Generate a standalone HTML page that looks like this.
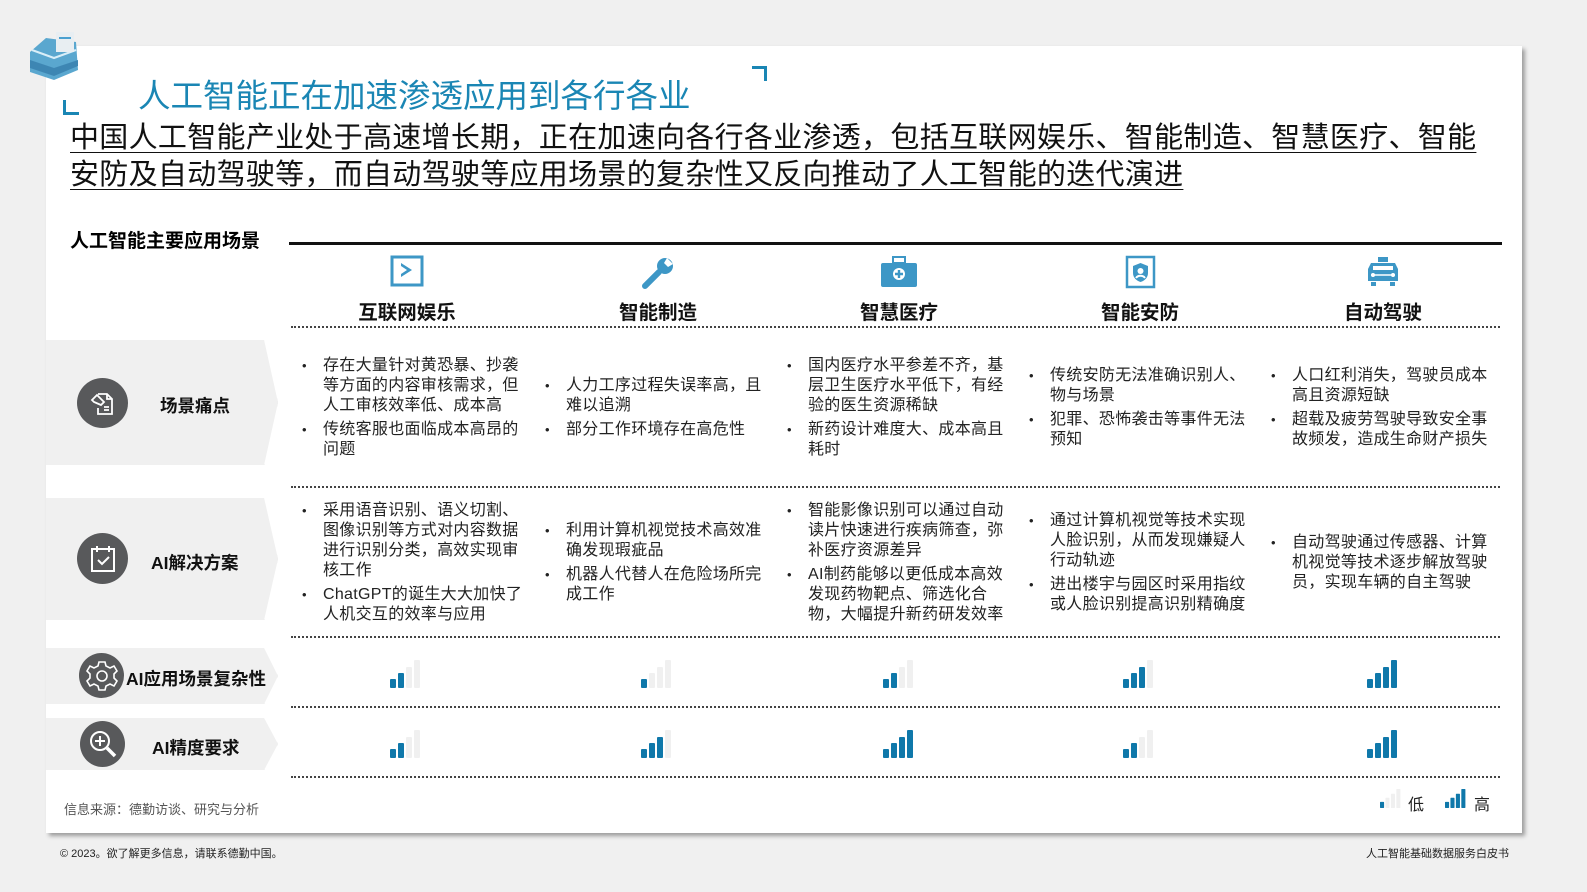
<!DOCTYPE html>
<html><head><meta charset="utf-8"><style>
*{margin:0;padding:0;box-sizing:border-box}
body{width:1587px;height:892px;background:#f0f0f0;position:relative;overflow:hidden;font-family:"Liberation Sans","Noto Sans CJK SC",sans-serif;color:#222}
.card{position:absolute;left:46px;top:46px;width:1476px;height:787px;background:#fff;box-shadow:3px 3px 4px rgba(0,0,0,.35)}
.abs{position:absolute}
.title{left:138px;top:70px;font-size:32.5px;color:#1a86b4;white-space:nowrap}
.head{left:70px;top:120px;font-size:29px;letter-spacing:0.3px;line-height:37px;color:#111;text-decoration:underline;text-decoration-thickness:1px;text-underline-offset:5px;width:1425px}
.sub{left:70px;top:226px;font-size:19px;font-weight:bold;color:#000;white-space:nowrap}
.thick{left:289px;top:242px;width:1213px;height:3px;background:#111}
.dot{position:absolute;left:291px;width:1209px;border-top:2px dotted #444}
.colh{position:absolute;top:296px;width:200px;text-align:center;font-size:19.5px;font-weight:bold;color:#111}
.cell{position:absolute;width:222px;display:flex;flex-direction:column;justify-content:center;font-size:16px;letter-spacing:0.3px;line-height:20px;color:#222}
.cell div{padding-left:21px;position:relative;margin:2px 0}
.cell div:before{content:"•";position:absolute;left:0;top:0;font-size:13px}
.lab{position:absolute;left:46px;background:#f0f0f0;box-shadow:0 4px 4px rgba(0,0,0,.25);clip-path:polygon(0 0,94% 0,100% 50%,94% 100%,0 100%)}
.circ{position:absolute;border-radius:50%;background:#58595b;display:flex;align-items:center;justify-content:center}
.lt{position:absolute;font-size:17.5px;font-weight:bold;color:#111;white-space:nowrap}
.bars{position:absolute;width:30px;height:26px}
.bars i{position:absolute;bottom:0;width:6px;border-radius:1px;background:#f0f0f0}
.bars i.on{background:#0f78aa}
</style></head><body>
<div class="card"></div>
<svg class="abs" style="left:26px;top:22px" width="58" height="60" viewBox="0 0 58 60"><path d="M4 30 L20 16 L50 20 L52 48 L28 58 L4 50Z" fill="#5aa7cf"/><path d="M4 38 L28 46 L52 38 L52 44 L28 54 L4 46Z" fill="#3d86b3"/><path d="M6 28 L28 36 L50 28" stroke="#d9eef8" stroke-width="2" fill="none"/><rect x="30" y="10" width="18" height="20" fill="#e8eef2"/><rect x="33" y="15" width="12" height="2" fill="#4aa0d0"/></svg>
<div class="abs" style="left:63px;top:100px;width:16px;height:15px;border-left:3px solid #1a86b4;border-bottom:3px solid #1a86b4"></div>
<div class="abs" style="left:752px;top:66px;width:15px;height:15px;border-right:3px solid #1a86b4;border-top:3px solid #1a86b4"></div>
<div class="abs title">人工智能正在加速渗透应用到各行各业</div>
<div class="abs head">中国人工智能产业处于高速增长期，正在加速向各行各业渗透，包括互联网娱乐、智能制造、智慧医疗、智能安防及自动驾驶等，而自动驾驶等应用场景的复杂性又反向推动了人工智能的迭代演进</div>
<div class="abs sub">人工智能主要应用场景</div>
<div class="abs thick"></div>

<svg class="abs" style="left:390px;top:255px" width="34" height="32" viewBox="0 0 34 32"><rect x="2" y="2" width="30" height="28" fill="none" stroke="#3d97c6" stroke-width="3"/><path d="M11 8 V22 L22 15Z" fill="#3d97c6"/><path d="M11 11v8l6-4z" fill="#fff"/></svg>
<svg class="abs" style="left:640px;top:255px" width="36" height="36" viewBox="0 0 36 36"><path d="M5 31 L19 17" stroke="#3d97c6" stroke-width="6" stroke-linecap="round"/><circle cx="25" cy="11" r="8" fill="#3d97c6"/><path d="M27 3 L33 9 L28 12 L24 8Z" fill="#fff"/></svg>
<svg class="abs" style="left:880px;top:255px" width="38" height="34" viewBox="0 0 38 34"><rect x="13" y="2" width="12" height="6" fill="none" stroke="#3d97c6" stroke-width="2"/><rect x="1" y="8" width="36" height="24" rx="2" fill="#3d97c6"/><circle cx="19" cy="19" r="6" fill="#fff"/><path d="M19 15v8M15 19h8" stroke="#3d97c6" stroke-width="2.4"/></svg>
<svg class="abs" style="left:1125px;top:255px" width="32" height="34" viewBox="0 0 32 34"><rect x="2" y="2" width="27" height="30" fill="none" stroke="#3d97c6" stroke-width="2.5"/><path d="M15.5 8 L23 11 V18 C23 23 19 26 15.5 27 C12 26 8 23 8 18 V11Z" fill="#3d97c6"/><circle cx="15.5" cy="16" r="3" fill="#fff"/><path d="M11 23c2-3 7-3 9 0" stroke="#fff" stroke-width="2" fill="none"/></svg>
<svg class="abs" style="left:1365px;top:255px" width="36" height="34" viewBox="0 0 36 34"><rect x="13" y="2" width="10" height="5" fill="#3d97c6"/><path d="M6 8 H30 L33 14 V26 H3 V14Z" fill="#3d97c6"/><rect x="8" y="11" width="20" height="4" fill="#fff"/><path d="M6 20 H30" stroke="#fff" stroke-width="1.5"/><circle cx="8" cy="20" r="2" fill="#fff"/><circle cx="28" cy="20" r="2" fill="#fff"/><rect x="6" y="27" width="5" height="4" fill="#3d97c6"/><rect x="25" y="27" width="5" height="4" fill="#3d97c6"/></svg>

<div class="colh" style="left:307px">互联网娱乐</div>
<div class="colh" style="left:558px">智能制造</div>
<div class="colh" style="left:799px">智慧医疗</div>
<div class="colh" style="left:1040px">智能安防</div>
<div class="colh" style="left:1283px">自动驾驶</div>

<div class="dot" style="top:326px"></div>
<div class="dot" style="top:486px"></div>
<div class="dot" style="top:636px"></div>
<div class="dot" style="top:706px"></div>
<div class="dot" style="top:776px"></div>

<div class="lab" style="top:340px;width:232px;height:125px"></div>
<div class="lab" style="top:498px;width:232px;height:122px"></div>
<div class="lab" style="top:648px;width:232px;height:56px"></div>
<div class="lab" style="top:718px;width:232px;height:52px"></div>

<div class="circ" style="left:77px;top:378px;width:51px;height:50px"><svg width="30" height="30" viewBox="0 0 30 30" fill="none" stroke="#fff" stroke-width="1.8"><path d="M10 6 H19 L24 11 V26 H10 V20"/><path d="M19 6 V11 H24"/><path d="M4 12 L9 7 L16 14 L13 17 L6 14Z"/><path d="M16 19h5M16 22h5"/></svg></div>
<div class="lt" style="left:160px;top:393px">场景痛点</div>
<div class="circ" style="left:77px;top:533px;width:51px;height:51px"><svg width="28" height="30" viewBox="0 0 28 30" fill="none" stroke="#fff" stroke-width="2"><rect x="3" y="5" width="22" height="22"/><path d="M8 2v6M20 2v6"/><path d="M9 16l4 4 7-7"/></svg></div>
<div class="lt" style="left:151px;top:550px">AI解决方案</div>
<div class="circ" style="left:79px;top:653px;width:45px;height:45px"><svg width="34" height="34" viewBox="0 0 34 34" fill="none" stroke="#fff" stroke-width="1.6"><path d="M14 3h6l1 4 4 2 4-2 3 5-3 3v4l3 3-3 5-4-2-4 2-1 4h-6l-1-4-4-2-4 2-3-5 3-3v-4l-3-3 3-5 4 2 4-2z"/><circle cx="17" cy="17" r="5"/></svg></div>
<div class="lt" style="left:126px;top:666px">AI应用场景复杂性</div>
<div class="circ" style="left:80px;top:721px;width:45px;height:46px"><svg width="32" height="32" viewBox="0 0 32 32" fill="none" stroke="#fff" stroke-width="2"><circle cx="13" cy="13" r="9"/><path d="M13 8v10M8 13h10"/><path d="M20 20l8 8" stroke-width="3.5"/></svg></div>
<div class="lt" style="left:152px;top:735px">AI精度要求</div>

<div class="cell" style="left:302px;top:348px;height:120px"><div>存在大量针对黄恐暴、抄袭等方面的内容审核需求，但人工审核效率低、成本高</div><div>传统客服也面临成本高昂的问题</div></div>
<div class="cell" style="left:545px;top:348px;height:120px"><div>人力工序过程失误率高，且难以追溯</div><div>部分工作环境存在高危性</div></div>
<div class="cell" style="left:787px;top:348px;height:120px"><div>国内医疗水平参差不齐，基层卫生医疗水平低下，有经验的医生资源稀缺</div><div>新药设计难度大、成本高且耗时</div></div>
<div class="cell" style="left:1029px;top:348px;height:120px"><div>传统安防无法准确识别人、物与场景</div><div>犯罪、恐怖袭击等事件无法预知</div></div>
<div class="cell" style="left:1271px;top:348px;height:120px"><div>人口红利消失，驾驶员成本高且资源短缺</div><div>超载及疲劳驾驶导致安全事故频发，造成生命财产损失</div></div>
<div class="cell" style="left:302px;top:500px;height:126px"><div>采用语音识别、语义切割、图像识别等方式对内容数据进行识别分类，高效实现审核工作</div><div>ChatGPT的诞生大大加快了人机交互的效率与应用</div></div>
<div class="cell" style="left:545px;top:500px;height:126px"><div>利用计算机视觉技术高效准确发现瑕疵品</div><div>机器人代替人在危险场所完成工作</div></div>
<div class="cell" style="left:787px;top:500px;height:126px"><div>智能影像识别可以通过自动读片快速进行疾病筛查，弥补医疗资源差异</div><div>AI制药能够以更低成本高效发现药物靶点、筛选化合物，大幅提升新药研发效率</div></div>
<div class="cell" style="left:1029px;top:500px;height:126px"><div>通过计算机视觉等技术实现人脸识别，从而发现嫌疑人行动轨迹</div><div>进出楼宇与园区时采用指纹或人脸识别提高识别精确度</div></div>
<div class="cell" style="left:1271px;top:500px;height:126px"><div>自动驾驶通过传感器、计算机视觉等技术逐步解放驾驶员，实现车辆的自主驾驶</div></div>

<div class="bars" style="left:390px;top:662px"><i class="on" style="left:0;height:9px"></i><i class="on" style="left:8px;height:15px"></i><i style="left:16px;height:21px"></i><i style="left:24px;height:28px"></i></div>
<div class="bars" style="left:641px;top:662px"><i class="on" style="left:0;height:9px"></i><i style="left:8px;height:15px"></i><i style="left:16px;height:21px"></i><i style="left:24px;height:28px"></i></div>
<div class="bars" style="left:883px;top:662px"><i class="on" style="left:0;height:9px"></i><i class="on" style="left:8px;height:15px"></i><i style="left:16px;height:21px"></i><i style="left:24px;height:28px"></i></div>
<div class="bars" style="left:1123px;top:662px"><i class="on" style="left:0;height:9px"></i><i class="on" style="left:8px;height:15px"></i><i class="on" style="left:16px;height:21px"></i><i style="left:24px;height:28px"></i></div>
<div class="bars" style="left:1367px;top:662px"><i class="on" style="left:0;height:9px"></i><i class="on" style="left:8px;height:15px"></i><i class="on" style="left:16px;height:21px"></i><i class="on" style="left:24px;height:28px"></i></div>

<div class="bars" style="left:390px;top:732px"><i class="on" style="left:0;height:9px"></i><i class="on" style="left:8px;height:15px"></i><i style="left:16px;height:21px"></i><i style="left:24px;height:28px"></i></div>
<div class="bars" style="left:641px;top:732px"><i class="on" style="left:0;height:9px"></i><i class="on" style="left:8px;height:15px"></i><i class="on" style="left:16px;height:21px"></i><i style="left:24px;height:28px"></i></div>
<div class="bars" style="left:883px;top:732px"><i class="on" style="left:0;height:9px"></i><i class="on" style="left:8px;height:15px"></i><i class="on" style="left:16px;height:21px"></i><i class="on" style="left:24px;height:28px"></i></div>
<div class="bars" style="left:1123px;top:732px"><i class="on" style="left:0;height:9px"></i><i class="on" style="left:8px;height:15px"></i><i style="left:16px;height:21px"></i><i style="left:24px;height:28px"></i></div>
<div class="bars" style="left:1367px;top:732px"><i class="on" style="left:0;height:9px"></i><i class="on" style="left:8px;height:15px"></i><i class="on" style="left:16px;height:21px"></i><i class="on" style="left:24px;height:28px"></i></div>

<div class="bars" style="left:1380px;top:782px;transform:scale(.68);transform-origin:0 100%"><i class="on" style="left:0;height:9px"></i><i style="left:8px;height:15px"></i><i style="left:16px;height:21px"></i><i style="left:24px;height:28px"></i></div>
<div class="abs" style="left:1408px;top:791px;font-size:16px">低</div>
<div class="bars" style="left:1445px;top:782px;transform:scale(.68);transform-origin:0 100%"><i class="on" style="left:0;height:9px"></i><i class="on" style="left:8px;height:15px"></i><i class="on" style="left:16px;height:21px"></i><i class="on" style="left:24px;height:28px"></i></div>
<div class="abs" style="left:1474px;top:791px;font-size:16px">高</div>

<div class="abs" style="left:64px;top:799px;font-size:13px;color:#555">信息来源：德勤访谈、研究与分析</div>
<div class="abs" style="left:60px;top:845px;font-size:11px;color:#222">© 2023。欲了解更多信息，请联系德勤中国。</div>
<div class="abs" style="left:1366px;top:845px;font-size:11px;color:#222">人工智能基础数据服务白皮书</div>
</body></html>
